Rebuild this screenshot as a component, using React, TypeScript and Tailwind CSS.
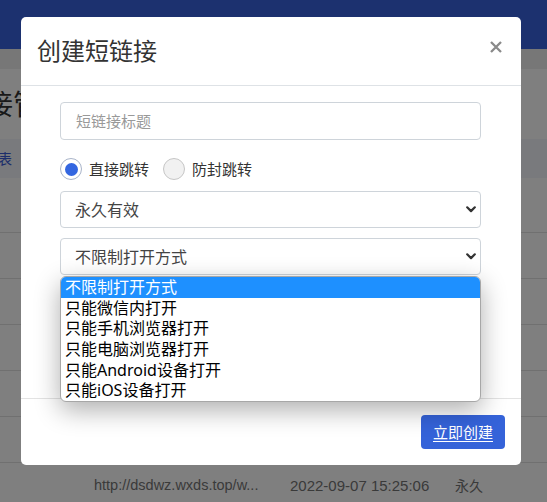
import React from 'react';

const options = [
  '不限制打开方式',
  '只能微信内打开',
  '只能手机浏览器打开',
  '只能电脑浏览器打开',
  '只能Android设备打开',
  '只能iOS设备打开',
];

function Chevron() {
  return (
    <svg width="10" height="7" viewBox="0 0 10 7" className="shrink-0">
      <path d="M1.2 1.3 L5 5.1 L8.8 1.3" fill="none" stroke="#333" strokeWidth="2.2" strokeLinecap="round" strokeLinejoin="round" />
    </svg>
  );
}

function Radio({ checked, label }: { checked?: boolean; label: string }) {
  return (
    <label className="flex items-center gap-[7px]">
      {checked ? (
        <span className="flex h-[22px] w-[22px] items-center justify-center rounded-full border-[1.5px] border-[#a9b4c9] bg-white">
          <span className="h-[13px] w-[13px] rounded-full bg-[#3366e0]" />
        </span>
      ) : (
        <span className="h-[22px] w-[22px] rounded-full border-[1.5px] border-[#c6c6c6] bg-[#f1f1f1]" />
      )}
      <span className="text-[15px] leading-[22px] text-[#333]">{label}</span>
    </label>
  );
}

export default function App() {
  return (
    <div className="relative h-[502px] w-[547px] overflow-hidden bg-white font-['Noto_Sans','Noto_Sans_CJK_SC',sans-serif]">
      {/* page behind the modal, scrolled a little to the right */}
      <header className="h-[49px] bg-[#3862de]" />
      <div className="h-[20px] bg-[#eeeeee]" />
      <div className="flex h-[70px] items-center">
        <h1 className="-ml-[71px] whitespace-nowrap text-[28px] leading-[36px] text-[#333]">短链接管理</h1>
      </div>
      <div className="flex h-[39px] items-center bg-[#f2f4fb]">
        <span className="-ml-[16px] text-[14px] text-[#3a5cd6]">列表</span>
      </div>
      <div className="h-[55px] border-b border-[#e0e0e0]" />
      <div className="h-[46px] border-b border-[#e0e0e0]" />
      <div className="h-[46px] border-b border-[#e0e0e0]" />
      <div className="h-[46px] border-b border-[#e0e0e0]" />
      <div className="h-[46px] border-b border-[#e0e0e0]" />
      <div className="h-[46px] border-b border-[#e0e0e0]" />
      <div className="flex h-[46px] items-center pl-[94px] font-['Liberation_Sans','Noto_Sans_CJK_SC',sans-serif] text-[14.5px] text-[#757575]">
        <span className="w-[196px] whitespace-nowrap">http://dsdwz.wxds.top/w...</span>
        <span className="w-[165px] whitespace-nowrap text-[15px]">2022-09-07 15:25:06</span>
        <span className="text-[14px]">永久</span>
      </div>

      {/* backdrop */}
      <div className="absolute inset-0 bg-black/50" />

      {/* modal */}
      <div className="absolute left-[21px] top-[17px] w-[500px] rounded-[5px] bg-white">
        <div className="flex items-start justify-between border-b border-[#dee2e6] p-4">
          <h4 className="text-[24px] leading-[36px] text-[#333]">创建短链接</h4>
          <button className="mr-[3px] mt-[8px]">
            <svg width="12" height="12" viewBox="0 0 12 12">
              <path d="M1 1 L11 11 M11 1 L1 11" stroke="#8a8a8a" strokeWidth="2.3" />
            </svg>
          </button>
        </div>

        <div className="py-4 pl-[39px] pr-[40px]">
          <div className="flex h-[38px] items-center rounded-[4px] border border-[#ced4da] px-[15px] text-[15px] text-[#999]">
            短链接标题
          </div>
          <div className="mt-[18px] flex items-center gap-[14px]">
            <Radio checked label="直接跳转" />
            <Radio label="防封跳转" />
          </div>
          <div className="mt-[11px] flex h-[37px] items-center justify-between rounded-[4px] border border-[#ced4da] pl-[14px] pr-[4px] text-[16px] text-[#444]">
            <span>永久有效</span>
            <Chevron />
          </div>
          <div className="relative mt-[10px]">
            <div className="flex h-[37px] items-center justify-between rounded-[4px] border border-[#ced4da] pl-[14px] pr-[4px] text-[16px] text-[#444]">
              <span>不限制打开方式</span>
              <Chevron />
            </div>
            <div className="mt-[10px] h-[97px] rounded-[4px] border border-[#ced4da]" />
            <ul className="absolute left-0 right-0 top-[38px] z-10 overflow-hidden rounded-[6px] border border-[#a7a7a7] bg-white shadow-[0_8px_26px_rgba(0,0,0,0.32)]">
              {options.map((o, i) => (
                <li
                  key={o}
                  className={
                    i === 0
                      ? 'h-[20.7px] bg-[#1e90ff] pl-[4px] text-[16px] leading-[20.7px] text-white'
                      : 'h-[20.7px] pl-[4px] text-[16px] leading-[20.7px] text-black'
                  }
                >
                  {o}
                </li>
              ))}
            </ul>
          </div>
        </div>

        <div className="flex justify-end border-t border-[#e3e3e3] p-4">
          <button className="h-[34px] rounded-[4px] bg-[#3563d9] px-[12px] text-[15px] text-white underline underline-offset-[3px]">
            立即创建
          </button>
        </div>
      </div>
    </div>
  );
}
